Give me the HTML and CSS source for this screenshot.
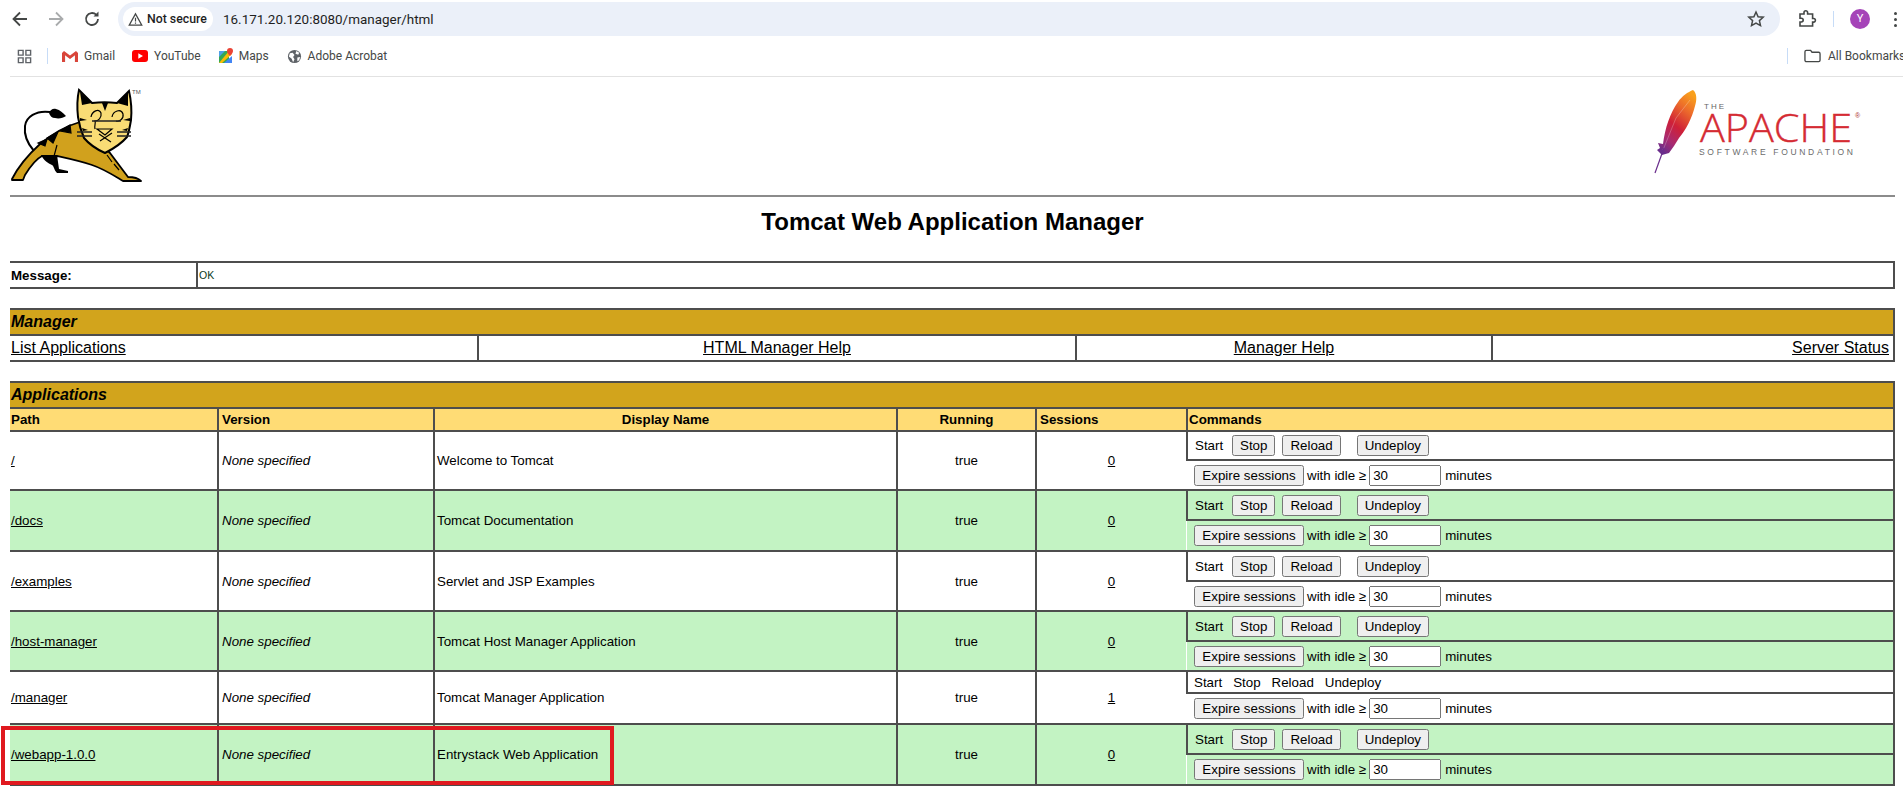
FILE: index.html
```html
<!DOCTYPE html>
<html>
<head>
<title>/manager</title>
<meta charset="utf-8">
<link rel="stylesheet" href="styles.css">
</head>
<body>

<div class="toolbar">
  <svg class="navicon" viewBox="0 0 20 20"><path d="M17 10H4M10 3.500 3.500 10l6.500 6.500" fill="none" stroke="#444746" stroke-width="1.800"/></svg>
  <svg class="navicon nav-fwd" viewBox="0 0 20 20"><path d="M3 10h13M10 3.500 16.500 10 10 16.500" fill="none" stroke="#a9abac" stroke-width="1.800"/></svg>
  <svg class="navicon nav-reload" viewBox="0 0 20 20"><path d="M16 10a6 6 0 1 1-1.800-4.300" fill="none" stroke="#444746" stroke-width="1.800"/><path d="M16.500 2.500v5h-5z" fill="#444746"/></svg>
  <div class="omnibox">
    <div class="chip">
      <svg class="warn" viewBox="0 0 16 16"><path d="M8 2 14.700 14H1.300zM8 6.200v4M8 11.300v1.200" fill="none" stroke="#444746" stroke-width="1.300"/></svg>
      <span>Not secure</span>
    </div>
    <span class="url">16.171.20.120:8080/manager/html</span>
    <svg class="star" viewBox="0 0 20 20"><path d="M10 3l2.100 4.700 5.100.5-3.800 3.400 1.100 5L10 14l-4.500 2.600 1.100-5-3.800-3.400 5.100-.5z" fill="none" stroke="#444746" stroke-width="1.500"/></svg>
  </div>
  <svg class="ext" viewBox="0 0 20 20"><path d="M3 5h4V3.500a1.800 1.800 0 0 1 3.600 0V5h5v4.500h1a1.800 1.800 0 0 1 0 3.600h-1V17H3v-4h1.300a1.900 1.900 0 0 0 0-3.800H3z" fill="none" stroke="#444746" stroke-width="1.600"/></svg>
  <div class="tb-sep"></div>
  <div class="avatar">Y</div>
  <div class="dots"><i></i><i></i><i></i></div>
</div>

<div class="bookmarks">
  <svg class="apps" viewBox="0 0 16 16"><path d="M1.500 1.500h5v5h-5zM9.500 1.500h5v5h-5zM1.500 9.500h5v5h-5zM9.500 9.500h5v5h-5z" fill="none" stroke="#5f6368" stroke-width="1.500"/></svg>
  <div class="bm-sep"></div>
  <div class="bm bm-gmail">
    <svg viewBox="0 0 16 13"><path d="M1 12V2l7 5.500L15 2v10h-2.500V5.500L8 9 3.500 5.500V12z" fill="#e8e6e3"/><path d="M0 3v9h3V5.200L8 9l5-3.800V12h3V3L14 1 8 5.500 2 1z" fill="#d9453a"/></svg>
    <span>Gmail</span>
  </div>
  <div class="bm bm-yt">
    <svg viewBox="0 0 16 12"><rect width="16" height="12" rx="3" fill="#f00"/><path d="M6.300 3.300 11 6l-4.700 2.700z" fill="#fff"/></svg>
    <span>YouTube</span>
  </div>
  <div class="bm bm-maps">
    <svg viewBox="0 0 16 16"><path d="M1 3h10v12H1z" fill="#34a853"/><path d="M1 15 11 3h3v3L4 15z" fill="#fbbc04"/><path d="M6 15l8-7v7z" fill="#4285f4"/><path d="M1 3h6L1 9z" fill="#4fa0e8"/><path d="M12 0a3 3 0 0 1 3 3c0 2-3 5-3 5S9 5 9 3a3 3 0 0 1 3-3z" fill="#ea4335"/></svg>
    <span>Maps</span>
  </div>
  <div class="bm bm-acrobat">
    <svg viewBox="0 0 16 16"><circle cx="8" cy="8" r="7" fill="#5f6368"/><path d="M3 4.500 6 4l2 2.500-1.500 2L8 11l-1.500 3L5 10.500 2 8zM10 2l3 2-1 2-3-1zM11 9l3-.5-1 3.500-2 1z" fill="#fff"/></svg>
    <span>Adobe Acrobat</span>
  </div>
  <div class="bm-right">
    <div class="bm-sep"></div>
    <svg class="folder" viewBox="0 0 18 14"><path d="M1 2.500A1.500 1.500 0 0 1 2.500 1H7l1.500 2h7A1.500 1.500 0 0 1 17 4.500v7a1.500 1.500 0 0 1-1.500 1.500h-13A1.500 1.500 0 0 1 1 11.500z" fill="none" stroke="#444746" stroke-width="1.400"/></svg>
    <span class="all">All Bookmarks</span>
  </div>
</div>

<div class="page">

  <div class="logos">
    <svg class="tomcat" viewBox="0 0 134 96">
      <!-- tail -->
      <path d="M24 63C17 55 14 46 15 38c1-9 11-16 25-14" fill="none" stroke="#000" stroke-width="2"/>
      <path d="M39 25c1-3 4-5 7-4 4 1 7 4 10 7-3 2-7 3-11 2-3 0-5-2-6-5z" fill="#000"/>
      <!-- body -->
      <path d="M2 91C8 79 18 67 30 56c12-10 26-18 40-22l30 31 18 24c5 0 10 1 13 4H113C103 87 94 81 82 77 70 73 56 70 47 68l-15 0c-6 3-12 11-17 19l-2 5H2z" fill="#d1a11d" stroke="#000" stroke-width="1.800" stroke-linejoin="round"/>
      <path d="M31 67h16l2 14 9 2v2H47c-3-3-3-7-5-8-4-2-8-4-11-10z" fill="#000"/>
      <path d="M50 43l10-6 1 8zM37 50l11-6-5 11zM28 55l9-4-2 7zM47 57l-4 15M97 67l5 7M104 76l5 6" fill="#000" stroke="#000" stroke-width="1.200"/>
      <!-- head -->
      <path d="M69 2l13 13c8-1 17-1 25 0L119 3c2 9 3 19 2 29-1 6-2 12-4 17-6 7-14 12-22 16-9-4-16-9-21-15-3-7-5-14-6-21-1-9-1-18 1-27z" fill="#f9dc75" stroke="#000" stroke-width="2"/>
      <path d="M70 4l12 11-10 2zM118 4l-11 11 11 3z" fill="#000"/>
      <path d="M92 15l3 8 3-8zM70 30l7 2-7 1zM72 40l6 2-5 1zM120 30l-7 2 7 1zM118 40l-6 2 5 1z" fill="#000"/>
      <path d="M81 29c1-6 8-9 10-4 1 5-3 8-6 8 1 2-1 5 0 8M102 29c1-6 9-9 11-3 1 5-4 8-7 7" fill="none" stroke="#000" stroke-width="1.200"/>
      <path d="M82 33h29M67 44h15M67 48h15M107 44h14M107 48h14" fill="none" stroke="#222" stroke-width="1.600"/>
      <path d="M87 41h15l-7 6zM90 53l12-8M89 46l12 8" fill="none" stroke="#000" stroke-width="1.200"/>
      <text x="122" y="6" class="tm">TM</text>
    </svg>
    <svg class="apache" viewBox="0 0 215 88">
      <defs>
        <linearGradient id="fth" x1="0.750" y1="0" x2="0.250" y2="1">
          <stop offset="0" stop-color="#f9a01c"/>
          <stop offset="0.250" stop-color="#ec6a2b"/>
          <stop offset="0.550" stop-color="#cf2038"/>
          <stop offset="0.800" stop-color="#a92a70"/>
          <stop offset="1" stop-color="#6a2d8c"/>
        </linearGradient>
      </defs>
      <path d="M43 2C47 5 47 12 45 18 42 30 36 42 29 50l-5 8-5 7-7 2-5-5 3-2-2-5 5 1C15 40 20 25 28 14 32 8 38 4 43 2z" fill="url(#fth)"/>
      <path d="M13 62 26 30 40 12" fill="none" stroke="#fff" stroke-opacity=".35" stroke-width=".7"/>
      <path d="M5 85 14 60" fill="none" stroke="#6a2d8c" stroke-width="1.200"/>
      <text x="54" y="21" class="ap-the">THE</text>
      <text x="50" y="54" class="ap-name" textLength="152" lengthAdjust="spacingAndGlyphs">APACHE</text>
      <text x="205" y="30" class="ap-reg">®</text>
      <text x="49" y="67" class="ap-sub" textLength="154">SOFTWARE FOUNDATION</text>
    </svg>
  </div>
  <hr class="rule">

  <h1 class="title">Tomcat Web Application Manager</h1>

  <table class="box msg">
    <tr>
      <td class="msg-label">Message:</td>
      <td class="msg-text">OK</td>
    </tr>
  </table>

  <table class="box mgr">
    <colgroup><col class="m1"><col class="m2"><col class="m3"><col></colgroup>
    <tr><td class="band" colspan="4">Manager</td></tr>
    <tr class="mgr-row">
      <td class="left"><a href="#">List Applications</a></td>
      <td class="center"><a href="#">HTML Manager Help</a></td>
      <td class="center"><a href="#">Manager Help</a></td>
      <td class="right"><a href="#">Server Status</a></td>
    </tr>
  </table>

  <table class="box apps-table">
    <colgroup><col class="c1"><col class="c2"><col class="c3"><col class="c4"><col class="c5"><col></colgroup>
    <tr><td class="band" colspan="6">Applications</td></tr>
    <tr class="head">
      <td>Path</td>
      <td class="ver">Version</td>
      <td class="center">Display Name</td>
      <td class="center">Running</td>
      <td class="ver">Sessions</td>
      <td>Commands</td>
    </tr>

    <tr class="row first">
      <td rowspan="2"><a href="#">/</a></td>
      <td rowspan="2" class="ver"><i>None specified</i></td>
      <td rowspan="2" class="dn">Welcome to Tomcat</td>
      <td rowspan="2" class="center">true</td>
      <td rowspan="2" class="center"><a href="#">0</a></td>
      <td class="cmd"><div class="cmds"><span class="start">Start</span><button class="b-stop">Stop</button><button class="b-reload">Reload</button><button>Undeploy</button></div></td>
    </tr>
    <tr class="row">
      <td class="cmd"><div class="cmds"><button class="b-exp">Expire sessions</button><span class="idle">with idle ≥</span><input class="mins" value="30"><span class="minutes">minutes</span></div></td>
    </tr>

    <tr class="row green">
      <td rowspan="2"><a href="#">/docs</a></td>
      <td rowspan="2" class="ver"><i>None specified</i></td>
      <td rowspan="2" class="dn">Tomcat Documentation</td>
      <td rowspan="2" class="center">true</td>
      <td rowspan="2" class="center"><a href="#">0</a></td>
      <td class="cmd"><div class="cmds"><span class="start">Start</span><button class="b-stop">Stop</button><button class="b-reload">Reload</button><button>Undeploy</button></div></td>
    </tr>
    <tr class="row green tall">
      <td class="cmd"><div class="cmds"><button class="b-exp">Expire sessions</button><span class="idle">with idle ≥</span><input class="mins" value="30"><span class="minutes">minutes</span></div></td>
    </tr>

    <tr class="row">
      <td rowspan="2"><a href="#">/examples</a></td>
      <td rowspan="2" class="ver"><i>None specified</i></td>
      <td rowspan="2" class="dn">Servlet and JSP Examples</td>
      <td rowspan="2" class="center">true</td>
      <td rowspan="2" class="center"><a href="#">0</a></td>
      <td class="cmd"><div class="cmds"><span class="start">Start</span><button class="b-stop">Stop</button><button class="b-reload">Reload</button><button>Undeploy</button></div></td>
    </tr>
    <tr class="row">
      <td class="cmd"><div class="cmds"><button class="b-exp">Expire sessions</button><span class="idle">with idle ≥</span><input class="mins" value="30"><span class="minutes">minutes</span></div></td>
    </tr>

    <tr class="row green">
      <td rowspan="2"><a href="#">/host-manager</a></td>
      <td rowspan="2" class="ver"><i>None specified</i></td>
      <td rowspan="2" class="dn">Tomcat Host Manager Application</td>
      <td rowspan="2" class="center">true</td>
      <td rowspan="2" class="center"><a href="#">0</a></td>
      <td class="cmd"><div class="cmds"><span class="start">Start</span><button class="b-stop">Stop</button><button class="b-reload">Reload</button><button>Undeploy</button></div></td>
    </tr>
    <tr class="row green">
      <td class="cmd"><div class="cmds"><button class="b-exp">Expire sessions</button><span class="idle">with idle ≥</span><input class="mins" value="30"><span class="minutes">minutes</span></div></td>
    </tr>

    <tr class="row">
      <td rowspan="2"><a href="#">/manager</a></td>
      <td rowspan="2" class="ver"><i>None specified</i></td>
      <td rowspan="2" class="dn">Tomcat Manager Application</td>
      <td rowspan="2" class="center">true</td>
      <td rowspan="2" class="center"><a href="#">1</a></td>
      <td class="cmd short"><div class="cmds plain"><span>Start</span><span>Stop</span><span>Reload</span><span>Undeploy</span></div></td>
    </tr>
    <tr class="row tall">
      <td class="cmd"><div class="cmds"><button class="b-exp">Expire sessions</button><span class="idle">with idle ≥</span><input class="mins" value="30"><span class="minutes">minutes</span></div></td>
    </tr>

    <tr class="row green">
      <td rowspan="2"><a href="#">/webapp-1.0.0</a></td>
      <td rowspan="2" class="ver"><i>None specified</i></td>
      <td rowspan="2" class="dn">Entrystack Web Application</td>
      <td rowspan="2" class="center">true</td>
      <td rowspan="2" class="center"><a href="#">0</a></td>
      <td class="cmd"><div class="cmds"><span class="start">Start</span><button class="b-stop">Stop</button><button class="b-reload">Reload</button><button>Undeploy</button></div></td>
    </tr>
    <tr class="row green tall">
      <td class="cmd"><div class="cmds"><button class="b-exp">Expire sessions</button><span class="idle">with idle ≥</span><input class="mins" value="30"><span class="minutes">minutes</span></div></td>
    </tr>
  </table>

</div>

<div class="redbox"></div>

</body>
</html>
```

FILE: styles.css
```css
html, body {
  margin: 0;
  height: 800px;
  overflow: hidden;
  background-color: white;
}

body {
  font-family: "Liberation Sans", Arial, sans-serif;
  font-size: 13.33px;
  color: black;
  position: relative;
}

/* browser bars */
.toolbar {
  display: flex;
  align-items: center;
  height: 38px;
  padding-left: 10px;
  box-sizing: border-box;
}

.navicon {
  width: 20px;
  height: 20px;
  flex: none;
}

.nav-fwd { margin-left: 16px; }
.nav-reload { margin-left: 16px; }

.omnibox {
  display: flex;
  align-items: center;
  flex: none;
  width: 1662px;
  height: 34px;
  margin-left: 16px;
  border-radius: 17px;
  background-color: #ebf0f9;
  box-sizing: border-box;
  padding-left: 5px;
}

.chip {
  display: flex;
  align-items: center;
  gap: 4px;
  width: 90px;
  height: 24px;
  box-sizing: border-box;
  padding-left: 5px;
  border-radius: 12px;
  background-color: white;
  font-family: Roboto, sans-serif;
  font-size: 12.300px;
  font-weight: 500;
  color: #1f1f1f;
  white-space: nowrap;
}

.warn { width: 15px; height: 15px; flex: none; }

.url {
  margin-left: 10px;
  font-family: Roboto, sans-serif;
  font-size: 13.450px;
  color: #1f1f1f;
}

.star {
  width: 20px;
  height: 20px;
  margin-left: auto;
  margin-right: 14px;
}

.ext { width: 20px; height: 20px; margin-left: 17px; flex: none; }

.tb-sep {
  width: 1px;
  height: 16px;
  margin-left: 16px;
  background-color: #c7dcf7;
}

.avatar {
  width: 20px;
  height: 20px;
  margin-left: 16px;
  border-radius: 50%;
  background-color: #a544b8;
  color: white;
  font-family: Roboto, sans-serif;
  font-size: 11px;
  text-align: center;
  line-height: 20px;
}

.dots {
  display: flex;
  flex-direction: column;
  gap: 3px;
  margin-left: 24px;
}

.dots i {
  display: block;
  width: 3px;
  height: 3px;
  border-radius: 50%;
  background-color: #444746;
}

.bookmarks {
  display: flex;
  align-items: center;
  height: 36px;
  margin-left: 10px;
  padding-left: 7px;
  padding-bottom: 2px;
  border-bottom: 1px solid #e2e2e2;
  font-family: Roboto, sans-serif;
  font-size: 12px;
  color: #444746;
}

.apps { width: 15px; height: 15px; flex: none; }

.bm-sep {
  width: 1px;
  height: 16px;
  background-color: #c7dcf7;
  margin-left: 15px;
}

.bm {
  display: flex;
  align-items: center;
  white-space: nowrap;
}

.bm svg { flex: none; }
.bm-gmail { margin-left: 14px; gap: 6px; }
.bm-gmail svg { width: 16px; height: 13px; }
.bm-yt { margin-left: 17px; gap: 6px; }
.bm-yt svg { width: 16px; height: 12px; }
.bm-maps { margin-left: 17px; gap: 5px; }
.bm-maps svg { width: 16px; height: 16px; }
.bm-acrobat { margin-left: 18px; gap: 6px; }
.bm-acrobat svg { width: 15px; height: 15px; }

.bm-right {
  display: flex;
  align-items: center;
  margin-left: auto;
  white-space: nowrap;
}

.bm-right .bm-sep { margin-left: 0; }
.folder { width: 17px; height: 14px; margin-left: 16px; flex: none; }
.all { margin-left: 7px; width: 75px; }

/* page */
.page {
  margin: 0 8px 0 10px;
}

.logos {
  display: flex;
  justify-content: space-between;
  height: 118px;
}

.tomcat {
  width: 134px;
  height: 96px;
  margin-top: 11px;
}

.tm {
  font-size: 6px;
  fill: #555;
}

.apache {
  width: 215px;
  height: 88px;
  margin-top: 11px;
  margin-right: 30px;
}

.ap-the {
  font-family: "Liberation Sans", sans-serif;
  font-size: 8px;
  letter-spacing: 2px;
  fill: #666;
}

.ap-name {
  font-family: "Open Sans", sans-serif;
  font-size: 39px;
  font-weight: 300;
  fill: #d52b33;
  stroke: #d52b33;
  stroke-width: .4px;
}

.ap-reg {
  font-size: 7px;
  fill: #a33;
}

.ap-sub {
  font-family: "Liberation Sans", sans-serif;
  font-size: 8.500px;
  fill: #6b6b6b;
}

.rule {
  height: 2px;
  margin: 0;
  border: 0;
  background-color: #8b8b8b;
}

.title {
  margin: 0;
  height: 64px;
  font-size: 24px;
  line-height: 49px;
  text-align: center;
  font-weight: bold;
}

.box {
  width: 100%;
  table-layout: fixed;
  border-collapse: collapse;
  border-top: 2px solid #4d4d4d;
  border-bottom: 2px solid #4d4d4d;
  border-right: 2px solid #4d4d4d;
}

.box td {
  padding: 0 1px;
  border-bottom: 2px solid #4d4d4d;
  border-left: 2px solid #4d4d4d;
  overflow: hidden;
  white-space: nowrap;
}

.box td:first-child { border-left: 0; }

.msg { height: 28px; }
.msg-label { width: 184px; font-weight: bold; }
.msg-text { font-size: 10.500px; color: #0a3a22; padding-left: 3px; }

.mgr { margin-top: 19px; }
.apps-table { margin-top: 19px; }

.band {
  height: 24px;
  background-color: #d2a41c;
  font-size: 16px;
  font-weight: bold;
  font-style: italic;
}

.mgr-row td { height: 24px; font-size: 16px; }
.m1 { width: 468px; }
.m2 { width: 598px; }
.m3 { width: 416px; }

.c1 { width: 208px; }
.c2 { width: 216px; }
.c3 { width: 463px; }
.c4 { width: 139px; }
.c5 { width: 151px; }

.head td {
  height: 21px;
  background-color: #ffdc75;
  font-weight: bold;
}

.box .ver { padding-left: 3px; }
.box .dn { padding-left: 2px; }

.row td { height: 28px; }
.first .cmd { height: 27px; }
.tall .cmd { height: 29px; }
.row .short { height: 20px; }
.green td { background-color: #c3f3c3; }

.left { text-align: left; }
.center { text-align: center; }
.right { text-align: right; padding-right: 4px !important; }

a { color: black; }

.box .cmd { padding: 0 0 0 7px; }

.cmds {
  display: flex;
  align-items: center;
}

.cmds button, .cmds input {
  font-family: "Liberation Sans", sans-serif;
  font-size: 13.33px;
}

.start { width: 37px; }
.b-stop { margin-right: 7px; }
.b-reload { margin-right: 16px; }
.b-exp { width: 110px; padding: 1px 0; }
.idle { margin: 0 3px; }
.mins { width: 72px; height: 21px; box-sizing: border-box; }
.minutes { margin-left: 4px; }

.plain { gap: 11px; margin-left: -1px; }

.redbox {
  position: absolute;
  left: 1px;
  top: 726px;
  width: 605px;
  height: 51px;
  border: 4px solid #e0191f;
}
```
